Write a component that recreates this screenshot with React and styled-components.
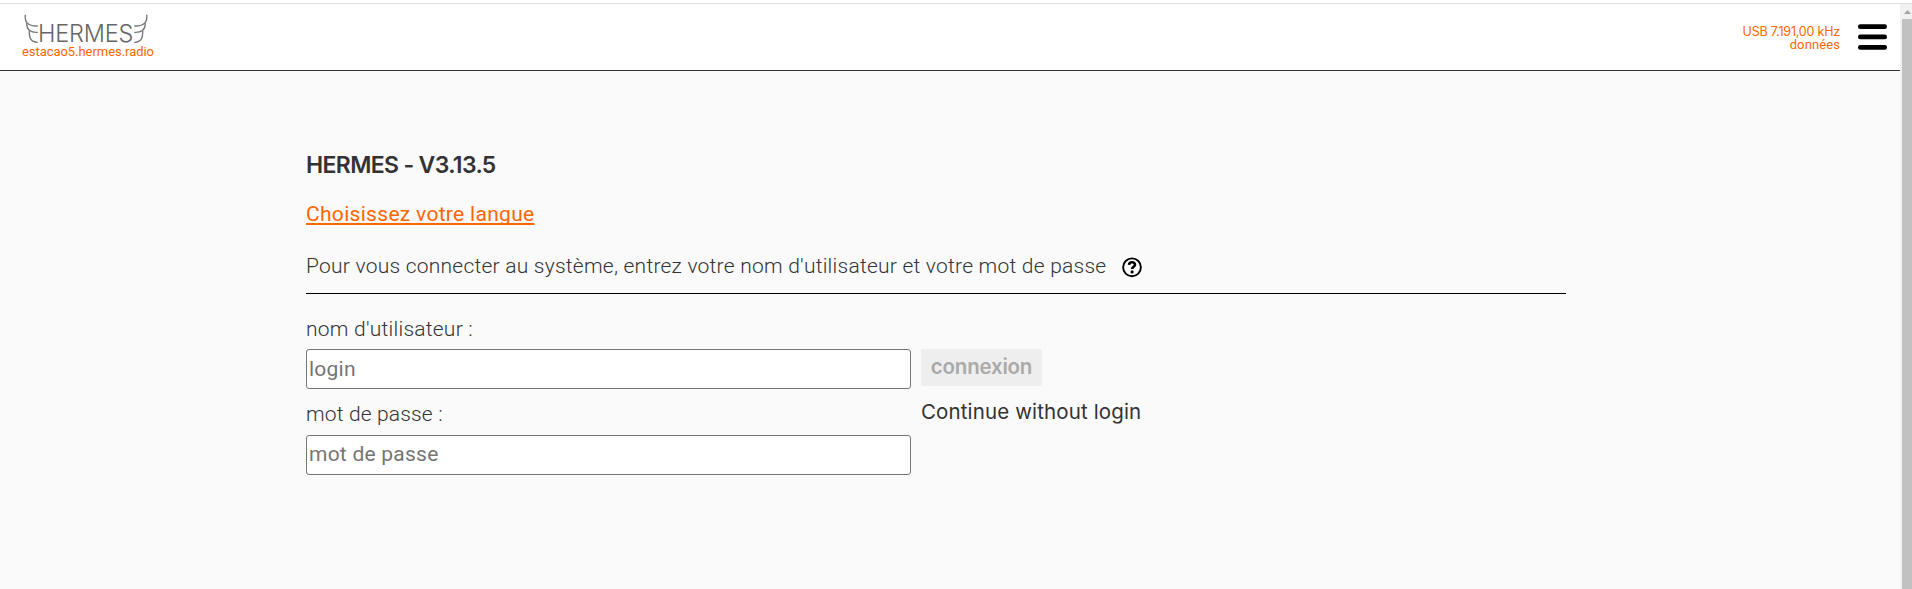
import React from "react";
import styled, { createGlobalStyle } from "styled-components";

const GlobalStyle = createGlobalStyle`
  *, *::before, *::after { box-sizing: border-box; }
  body {
    margin: 0;
    background: #fafafa;
    color: #333;
    font-family: Roboto, "Liberation Sans", sans-serif;
    overflow: hidden;
  }
`;

const Window = styled.div`
  display: flex;
  flex-direction: column;
  height: 100vh;
`;

const TopEdge = styled.div`
  flex: none;
  height: 4px;
  background: #fff;
  border-bottom: 1px solid #ddd;
`;

const Viewport = styled.div`
  display: flex;
  flex: 1;
  min-height: 0;
`;

const Page = styled.div`
  flex: 1;
  min-width: 0;
`;

const Scrollbar = styled.div`
  display: flex;
  flex-direction: column;
  width: 12px;
  padding-left: 2px;
  background: #f1f1f1;
`;

const ScrollArrow = styled.svg`
  display: block;
  flex: none;
  width: 10px;
  height: 15px;
`;

const ScrollThumb = styled.div`
  flex: 1;
  background: #c1c1c1;
`;

const Header = styled.header`
  display: flex;
  justify-content: space-between;
  height: 67px;
  padding: 0 13px 0 22px;
  background: #fff;
  border-bottom: 1px solid #333;
`;

const Brand = styled.div`
  display: flex;
  flex-direction: column;
  padding-top: 9px;
  color: #ff6600;
`;

const LogoMark = styled.div`
  display: flex;
  align-items: flex-start;
  height: 32px;
  padding-left: 2px;
`;

const WingIcon = styled.svg`
  display: block;
  flex: none;
  width: 14px;
  height: 32px;
  transform: ${(p) => (p.$flip ? "scaleX(-1)" : "none")};
`;

const Wordmark = styled.span`
  width: 96px;
  padding-top: 9px;
  color: #666;
  font: 300 23.5px/23px Inter, "Liberation Sans", sans-serif;
  letter-spacing: -0.2px;
  white-space: nowrap;
`;

const Small = styled.span`
  font-size: 13px;
  line-height: 13px;
  white-space: nowrap;
  letter-spacing: ${(p) => p.$spacing || 0}px;
`;

const Frequency = styled(Small)`
  font-family: Inter, sans-serif;
  font-size: 12.5px;
`;

const Status = styled.div`
  display: flex;
  gap: 18px;
  padding-top: 20px;
`;

const Radio = styled.div`
  display: flex;
  flex-direction: column;
  align-items: flex-end;
  padding-top: 1px;
  color: #ff6600;
`;

const MenuIcon = styled.svg`
  display: block;
  width: 29px;
  height: 26px;
`;

const Main = styled.main`
  width: 1260px;
  margin-left: 306px;
  padding-top: 78px;
  font-size: 21px;
  line-height: 28px;
`;

const Title = styled.h1`
  margin: 0 0 19px;
  font-family: Inter, sans-serif;
  font-size: 23px;
  font-weight: 600;
  line-height: 32px;
  letter-spacing: -0.65px;
`;

const LanguageLink = styled.a`
  display: block;
  width: max-content;
  margin-bottom: 24px;
  color: #ff6600;
  letter-spacing: 0.305px;
  text-decoration: underline;
  text-decoration-thickness: 2px;
  text-underline-offset: 2px;
  text-decoration-skip-ink: none;
`;

const Intro = styled.div`
  display: flex;
  gap: 15px;
  padding-bottom: 13px;
  border-bottom: 1px solid #000;
  font-weight: 300;
  letter-spacing: 0.237px;
`;

const HelpIcon = styled.svg`
  display: block;
  width: 22px;
  height: 22px;
  margin-top: 4px;
`;

const Form = styled.form`
  display: flex;
  gap: 10px;
  padding-top: 21px;
`;

const Fields = styled.div`
  display: flex;
  flex-direction: column;
  gap: 11px;
  width: 605px;
`;

const Field = styled.label`
  display: flex;
  flex-direction: column;
  gap: ${(p) => p.$gap}px;
  font-weight: 300;
  letter-spacing: ${(p) => p.$spacing}px;
`;

const Input = styled.input`
  width: 100%;
  height: 40px;
  padding: 0 2px ${(p) => p.$lift || 0}px;
  border: 1px solid #767676;
  border-radius: 3px;
  background: #fff;
  font: 400 21px Roboto, sans-serif;
  letter-spacing: 0.24px;
  outline: none;
  &::placeholder { color: #757575; }
`;

const Actions = styled.div`
  display: flex;
  flex-direction: column;
  align-items: flex-start;
  gap: 12px;
  padding-top: 34px;
`;

const SubmitButton = styled.button`
  width: 121px;
  height: 37px;
  padding: 0 0 2px;
  border: 0;
  border-radius: 2px;
  background: #eee;
  color: #aaa;
  font: 600 20.5px Inter, sans-serif;
  letter-spacing: -0.2px;
`;

const SkipLink = styled.a`
  font-family: Inter, sans-serif;
  font-size: 20.5px;
  letter-spacing: 0.13px;
  white-space: nowrap;
`;

function Wing({ flip }) {
  return (
    <WingIcon
      $flip={flip}
      viewBox="2 0 14 32"
      fill="none"
      stroke="#747474"
      strokeWidth="1.3"
      strokeLinecap="round"
    >
      <path d="M3.3 2.2C2.4 8 5 13.2 15.3 13" />
      <path d="M4.7 10.5C4.8 16.5 8 19.5 15.3 19.3" />
      <path d="M7.3 17.8C7 25 9 29.2 15.3 29.3" />
    </WingIcon>
  );
}

export default function App() {
  return (
    <Window>
      <GlobalStyle />
      <TopEdge />
      <Viewport>
        <Page>
          <Header>
            <Brand>
              <LogoMark>
                <Wing />
                <Wordmark>HERMES</Wordmark>
                <Wing flip />
              </LogoMark>
              <Small $spacing={-0.05}>estacao5.hermes.radio</Small>
            </Brand>
            <Status>
              <Radio>
                <Frequency $spacing={-0.2}>USB 7.191,00 kHz</Frequency>
                <Small $spacing={0.1}>données</Small>
              </Radio>
              <MenuIcon viewBox="0 0 29 26">
                <rect y="0.3" width="29" height="4.7" rx="2.3" />
                <rect y="10.6" width="29" height="4.7" rx="2.3" />
                <rect y="21" width="29" height="4.7" rx="2.3" />
              </MenuIcon>
            </Status>
          </Header>
          <Main>
            <Title>HERMES - V3.13.5</Title>
            <LanguageLink>Choisissez votre langue</LanguageLink>
            <Intro>
              <span>
                Pour vous connecter au système, entrez votre nom d'utilisateur et votre mot de passe
              </span>
              <HelpIcon viewBox="0 0 22 22" fill="none" stroke="#000">
                <circle cx="11" cy="11.3" r="8.9" strokeWidth="1.9" />
                <path d="M8 8.9C8.2 6.9 9.4 6.3 11 6.3C12.9 6.3 14 7.3 14 8.7C14 10.8 11.1 10.7 11.1 13.1" strokeWidth="2.6" />
                <circle cx="11.1" cy="15.9" r="1.6" fill="#000" stroke="none" />
              </HelpIcon>
            </Intro>
            <Form>
              <Fields>
                <Field $gap={6} $spacing={0.24}>
                  nom d'utilisateur :
                  <Input placeholder="login" />
                </Field>
                <Field $gap={7} $spacing={0.16}>
                  mot de passe :
                  <Input type="password" placeholder="mot de passe" $lift={2} />
                </Field>
              </Fields>
              <Actions>
                <SubmitButton type="button" disabled>connexion</SubmitButton>
                <SkipLink>Continue without login</SkipLink>
              </Actions>
            </Form>
          </Main>
        </Page>
        <Scrollbar>
          <ScrollArrow viewBox="0 0 10 15">
            <path d="M2 10L5.5 6L9 10Z" fill="#a3a3a3" />
          </ScrollArrow>
          <ScrollThumb />
        </Scrollbar>
      </Viewport>
    </Window>
  );
}
